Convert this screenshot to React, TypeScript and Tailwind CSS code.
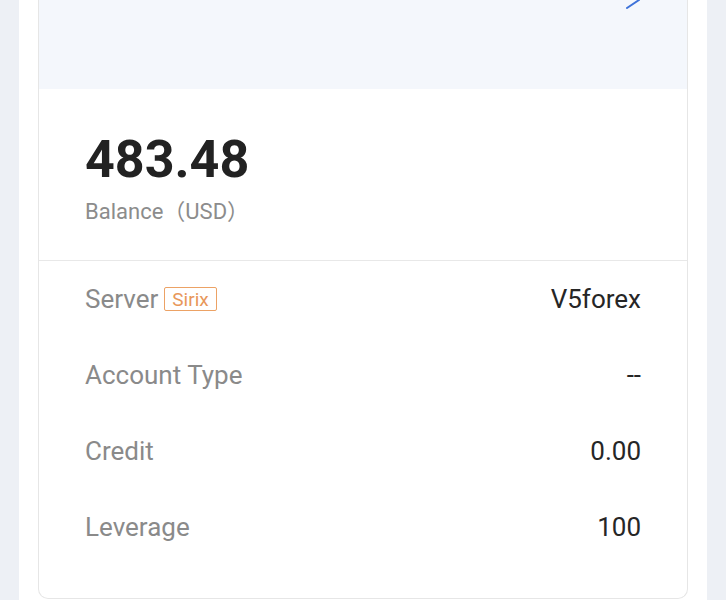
export default function App() {
  const rows: { label: string; value: string; badge?: string }[] = [
    { label: 'Server', value: 'V5forex', badge: 'Sirix' },
    { label: 'Account Type', value: '--' },
    { label: 'Credit', value: '0.00' },
    { label: 'Leverage', value: '100' },
  ];

  return (
    <div
      className="h-[600px] overflow-hidden bg-[#edf0f5] px-[19px] flex"
      style={{ fontFamily: 'Roboto, "Noto Sans CJK SC", sans-serif' }}
    >
      <div className="flex-1 bg-white px-[19px]">
        <div className="border border-t-0 border-[#e6e6e6] rounded-b-[10px] overflow-hidden">
          {/* top strip */}
          <div className="h-[89px] bg-[#f4f7fc] flex justify-end pr-[46px]">
            <svg width="16" height="12" viewBox="0 0 16 12" className="-mt-[3px]">
              <path d="M2 11 L14 3" stroke="#3d72d9" strokeWidth="2" strokeLinecap="round" fill="none" />
            </svg>
          </div>

          {/* balance */}
          <div className="pt-[39px] pb-[34px] px-[46px] border-b border-[#e8e8e8]">
            <div className="text-[52px] leading-[64px] font-bold text-[#222]">483.48</div>
            <div className="mt-[6px] text-[22px] leading-[28px] text-[#8c8c8c]">Balance（USD）</div>
          </div>

          {/* details */}
          <div className="px-[46px] pb-[33px]">
            {rows.map((r) => (
              <div key={r.label} className="h-[76px] flex items-center justify-between">
                <div className="flex items-center gap-[6px]">
                  <span className="text-[26px] text-[#8a8a8a]">{r.label}</span>
                  {r.badge && (
                    <span className="h-[24px] px-[7px] flex items-center border-[1.5px] border-[#eca265] rounded-[2px] text-[19px] text-[#e8975a] leading-none">
                      {r.badge}
                    </span>
                  )}
                </div>
                <span className="text-[26px] text-[#262626]">{r.value}</span>
              </div>
            ))}
          </div>
        </div>
      </div>
    </div>
  );
}
